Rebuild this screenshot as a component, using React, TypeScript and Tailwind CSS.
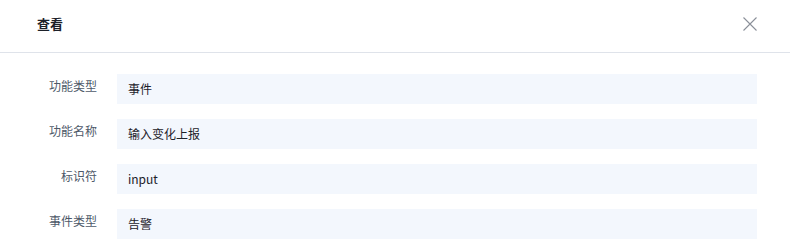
import React from "react";

const rows = [
  { label: "功能类型", value: "事件" },
  { label: "功能名称", value: "输入变化上报" },
  { label: "标识符", value: "input" },
  { label: "事件类型", value: "告警" },
];

export default function App() {
  return (
    <div
      className="w-[790px] h-[251px] bg-white overflow-hidden"
      style={{ fontFamily: '"Noto Sans CJK SC", "Noto Sans", sans-serif' }}
    >
      <div className="h-[53px] flex items-center justify-between pl-[37px] pr-[33px] pb-[5px] border-b border-[#dfe3ea]">
        <span className="text-[13px] font-bold text-[#1d2129]">查看</span>
        <svg width="14" height="14" viewBox="0 0 14 14">
          <path d="M0.5 0.5L13.5 13.5M13.5 0.5L0.5 13.5" stroke="#8a8f99" strokeWidth="1.1" fill="none" />
        </svg>
      </div>
      <div className="flex flex-col gap-[15px] pt-[21px] pr-[33px]">
        {rows.map((r) => (
          <div key={r.label} className="flex items-center h-[30px]">
            <div className="w-[97px] shrink-0 text-right text-[12px] text-[#4e5969] mb-[6px]">{r.label}</div>
            <div className="ml-[20px] flex-1 h-[30px] bg-[#f3f7fd] flex items-center pl-[11px] text-[12px] text-[#1d2129]">
              {r.value}
            </div>
          </div>
        ))}
      </div>
    </div>
  );
}
